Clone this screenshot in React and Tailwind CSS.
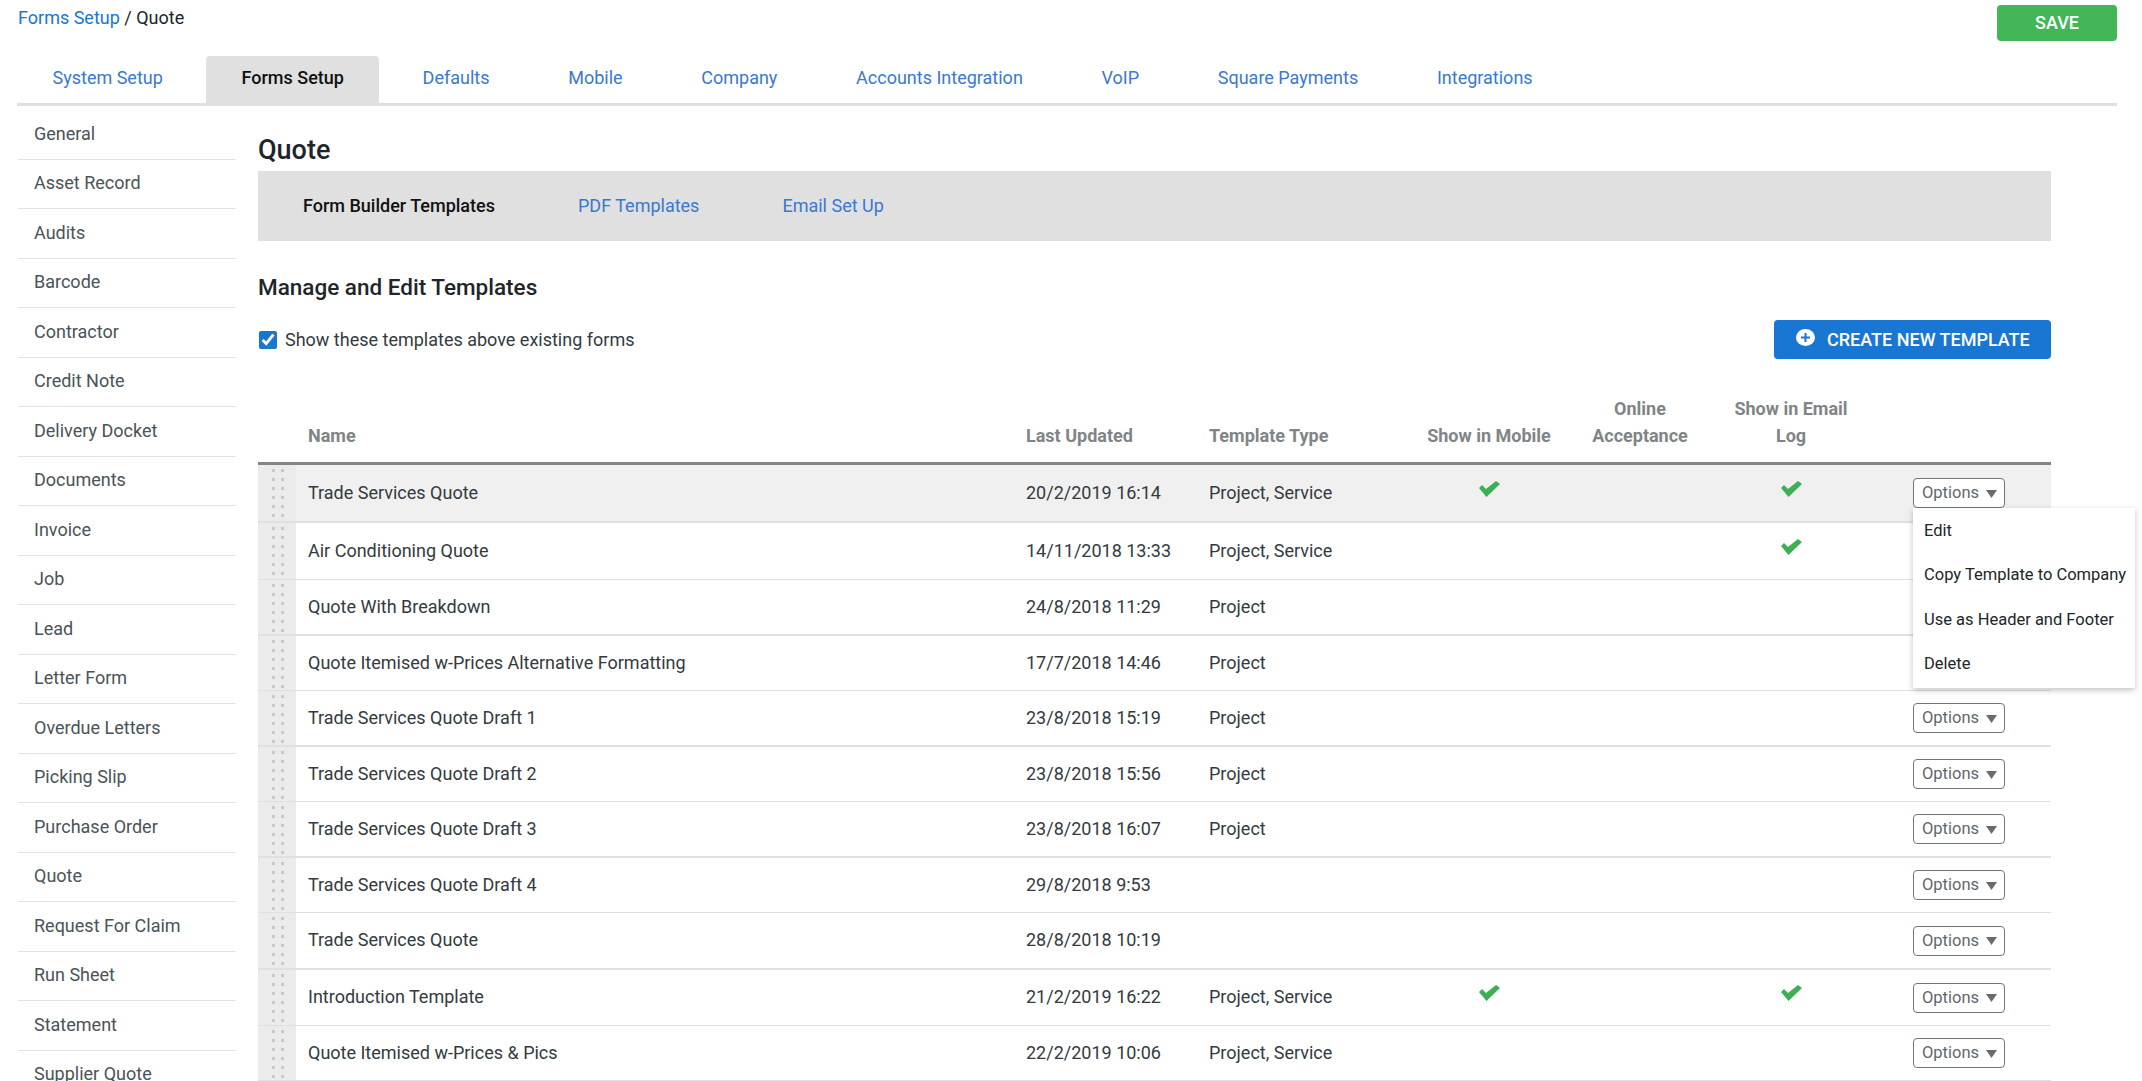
const tabs = ["System Setup", "Forms Setup", "Defaults", "Mobile", "Company", "Accounts Integration", "VoIP", "Square Payments", "Integrations"];

const sideItems = ["General", "Asset Record", "Audits", "Barcode", "Contractor", "Credit Note", "Delivery Docket", "Documents", "Invoice", "Job", "Lead", "Letter Form", "Overdue Letters", "Picking Slip", "Purchase Order", "Quote", "Request For Claim", "Run Sheet", "Statement", "Supplier Quote"];

const rows = [
  { name: "Trade Services Quote", date: "20/2/2019 16:14", type: "Project, Service", mobile: true, email: true, cls: "h-[58px] border-b-2 bg-[#f0f0f0]" },
  { name: "Air Conditioning Quote", date: "14/11/2018 13:33", type: "Project, Service", email: true, cls: "h-[57px] border-b" },
  { name: "Quote With Breakdown", date: "24/8/2018 11:29", type: "Project", cls: "h-[56px] border-b-2" },
  { name: "Quote Itemised w-Prices Alternative Formatting", date: "17/7/2018 14:46", type: "Project", cls: "h-[55px] border-b" },
  { name: "Trade Services Quote Draft 1", date: "23/8/2018 15:19", type: "Project", cls: "h-[56px] border-b-2" },
  { name: "Trade Services Quote Draft 2", date: "23/8/2018 15:56", type: "Project", cls: "h-[55px] border-b" },
  { name: "Trade Services Quote Draft 3", date: "23/8/2018 16:07", type: "Project", cls: "h-[56px] border-b-2" },
  { name: "Trade Services Quote Draft 4", date: "29/8/2018 9:53", type: "", cls: "h-[55px] border-b" },
  { name: "Trade Services Quote", date: "28/8/2018 10:19", type: "", cls: "h-[57px] border-b-2" },
  { name: "Introduction Template", date: "21/2/2019 16:22", type: "Project, Service", mobile: true, email: true, cls: "h-[56px] border-b" },
  { name: "Quote Itemised w-Prices & Pics", date: "22/2/2019 10:06", type: "Project, Service", cls: "h-[55px] border-b" },
];

const cols = "grid grid-cols-[38px_730px_183px_205px_150px_152px_150px_185px]";

const DragHandle = () => (
  <svg width="38" height="54" className="self-start" fill="#c9c9c9">
    {[5, 14, 23, 32, 41, 50].map((y) => (
      <g key={y}>
        <rect x="14" y={y - 1} width="3" height="3" />
        <rect x="23" y={y - 1} width="3" height="3" />
      </g>
    ))}
  </svg>
);

const Check = () => (
  <svg width="21" height="16" viewBox="0 0 21 16" className="mx-auto mb-[9px]" fill="#3cb054">
    <path d="M0 7L3 4L7 8L17 0L21 3L7.5 16Z" />
  </svg>
);

const PlusIcon = () => (
  <svg width="19" height="17" viewBox="0 0 19 17" className="mb-[5px] shrink-0">
    <ellipse cx="9.5" cy="8.5" rx="9.5" ry="8.5" fill="#fff" />
    <path d="M9.5 4v9M5 8.5h9" stroke="#1976d2" strokeWidth="2" />
  </svg>
);

const OptionsButton = () => (
  <button className="flex h-[30px] w-[92px] items-center justify-between rounded border border-[#6e767a] bg-white pl-2 pr-[7px] pt-px text-[16.5px] text-[#5f676b]">
    Options
    <svg width="11" height="8" viewBox="0 0 11 8" fill="#6b6b6b">
      <path d="M0 0h11L5.5 8Z" />
    </svg>
  </button>
);

export default function App() {
  return (
    <div className="h-[1081px] overflow-hidden bg-white font-['Roboto',sans-serif] text-[18px] text-[#333a3f]">
      <div className="flex h-[56px] items-start justify-between pl-[18px] pr-[25px] pt-[5px]">
        <div className="pt-[1px] leading-[24px] text-[#212529]">
          <a className="text-[#1976d2]">Forms Setup</a> / Quote
        </div>
        <button className="h-[36px] w-[120px] rounded bg-[#43b658] pb-px font-medium text-white">SAVE</button>
      </div>

      <div className="mx-[17px] flex h-[50px] w-[2100px] gap-[7.7px] border-b-[3px] border-[#e0e0e0]">
        {tabs.map((t) => (
          <a
            key={t}
            className={`flex h-[47px] items-center rounded-t px-[35.5px] pb-[4px] ${
              t === "Forms Setup" ? "bg-[#e0e0e0] font-medium text-[#111]" : "text-[#3a78d0]"
            }`}
          >
            {t}
          </a>
        ))}
      </div>

      <div className="flex">
        <aside className="ml-[18px] mt-[4px] w-[218px] shrink-0">
          {sideItems.map((s) => (
            <div key={s} className="flex h-[49.5px] items-center border-b-[1.5px] border-[#dfe3e8] pb-[2px] pl-4 text-[#4a5358]">
              {s}
            </div>
          ))}
        </aside>

        <main className="ml-[22px] w-[1793px] shrink-0">
          <h1 className="mt-[25px] text-[27px] font-medium leading-[38px] text-[#212529]">Quote</h1>
          <div className="mt-[2px] flex h-[70px] items-center gap-[83px] bg-[#e0e0e0] pb-[2px] pl-[45px]">
            <span className="font-medium text-[#111]">Form Builder Templates</span>
            <a className="text-[#3a78d0]">PDF Templates</a>
            <a className="text-[#3a78d0]">Email Set Up</a>
          </div>
          <h2 className="mt-[31px] text-[22.5px] font-medium leading-[30px] text-[#212529]">Manage and Edit Templates</h2>

          <div className="mt-[18px] flex h-[39px] items-center justify-between">
            <label className="flex items-center gap-2">
              <input type="checkbox" defaultChecked className="ml-px h-[18px] w-[18px] accent-[#1976d2]" />
              Show these templates above existing forms
            </label>
            <button className="flex h-[39px] w-[277px] items-center gap-[12px] rounded bg-[#1976d2] pl-[22px] font-medium text-white">
              <PlusIcon />
              CREATE NEW TEMPLATE
            </button>
          </div>

          <div className={`${cols} mt-[36px] h-[70px] items-end border-b-[3px] border-[#7f8587] pb-[13px] font-bold leading-[27px] text-[#7f8587]`}>
            <div />
            <div className="pl-3">Name</div>
            <div>Last Updated</div>
            <div>Template Type</div>
            <div className="text-center">Show in Mobile</div>
            <div className="text-center">Online<br />Acceptance</div>
            <div className="text-center">Show in Email<br />Log</div>
            <div />
          </div>

          <div className="relative">
            {rows.map((r, i) => (
              <div key={i} className={`${cols} items-center border-[#e0e0e0] ${r.cls}`}>
                <div className="flex h-full bg-[#ebebeb]"><DragHandle /></div>
                <div className="pb-[2px] pl-3">{r.name}</div>
                <div className="pb-[2px]">{r.date}</div>
                <div className="pb-[2px]">{r.type}</div>
                <div>{r.mobile && <Check />}</div>
                <div />
                <div>{r.email && <Check />}</div>
                <div className="pl-[47px]"><OptionsButton /></div>
              </div>
            ))}

            <div className="absolute left-[1655px] top-[43px] flex h-[180px] w-[222px] flex-col gap-[19.5px] bg-white pl-[11px] pt-[11px] text-[16.5px] text-[#212529] shadow-[0_2px_6px_rgba(0,0,0,0.25)]">
              <a>Edit</a>
              <a>Copy Template to Company</a>
              <a>Use as Header and Footer</a>
              <a>Delete</a>
            </div>
          </div>
        </main>
      </div>
    </div>
  );
}
